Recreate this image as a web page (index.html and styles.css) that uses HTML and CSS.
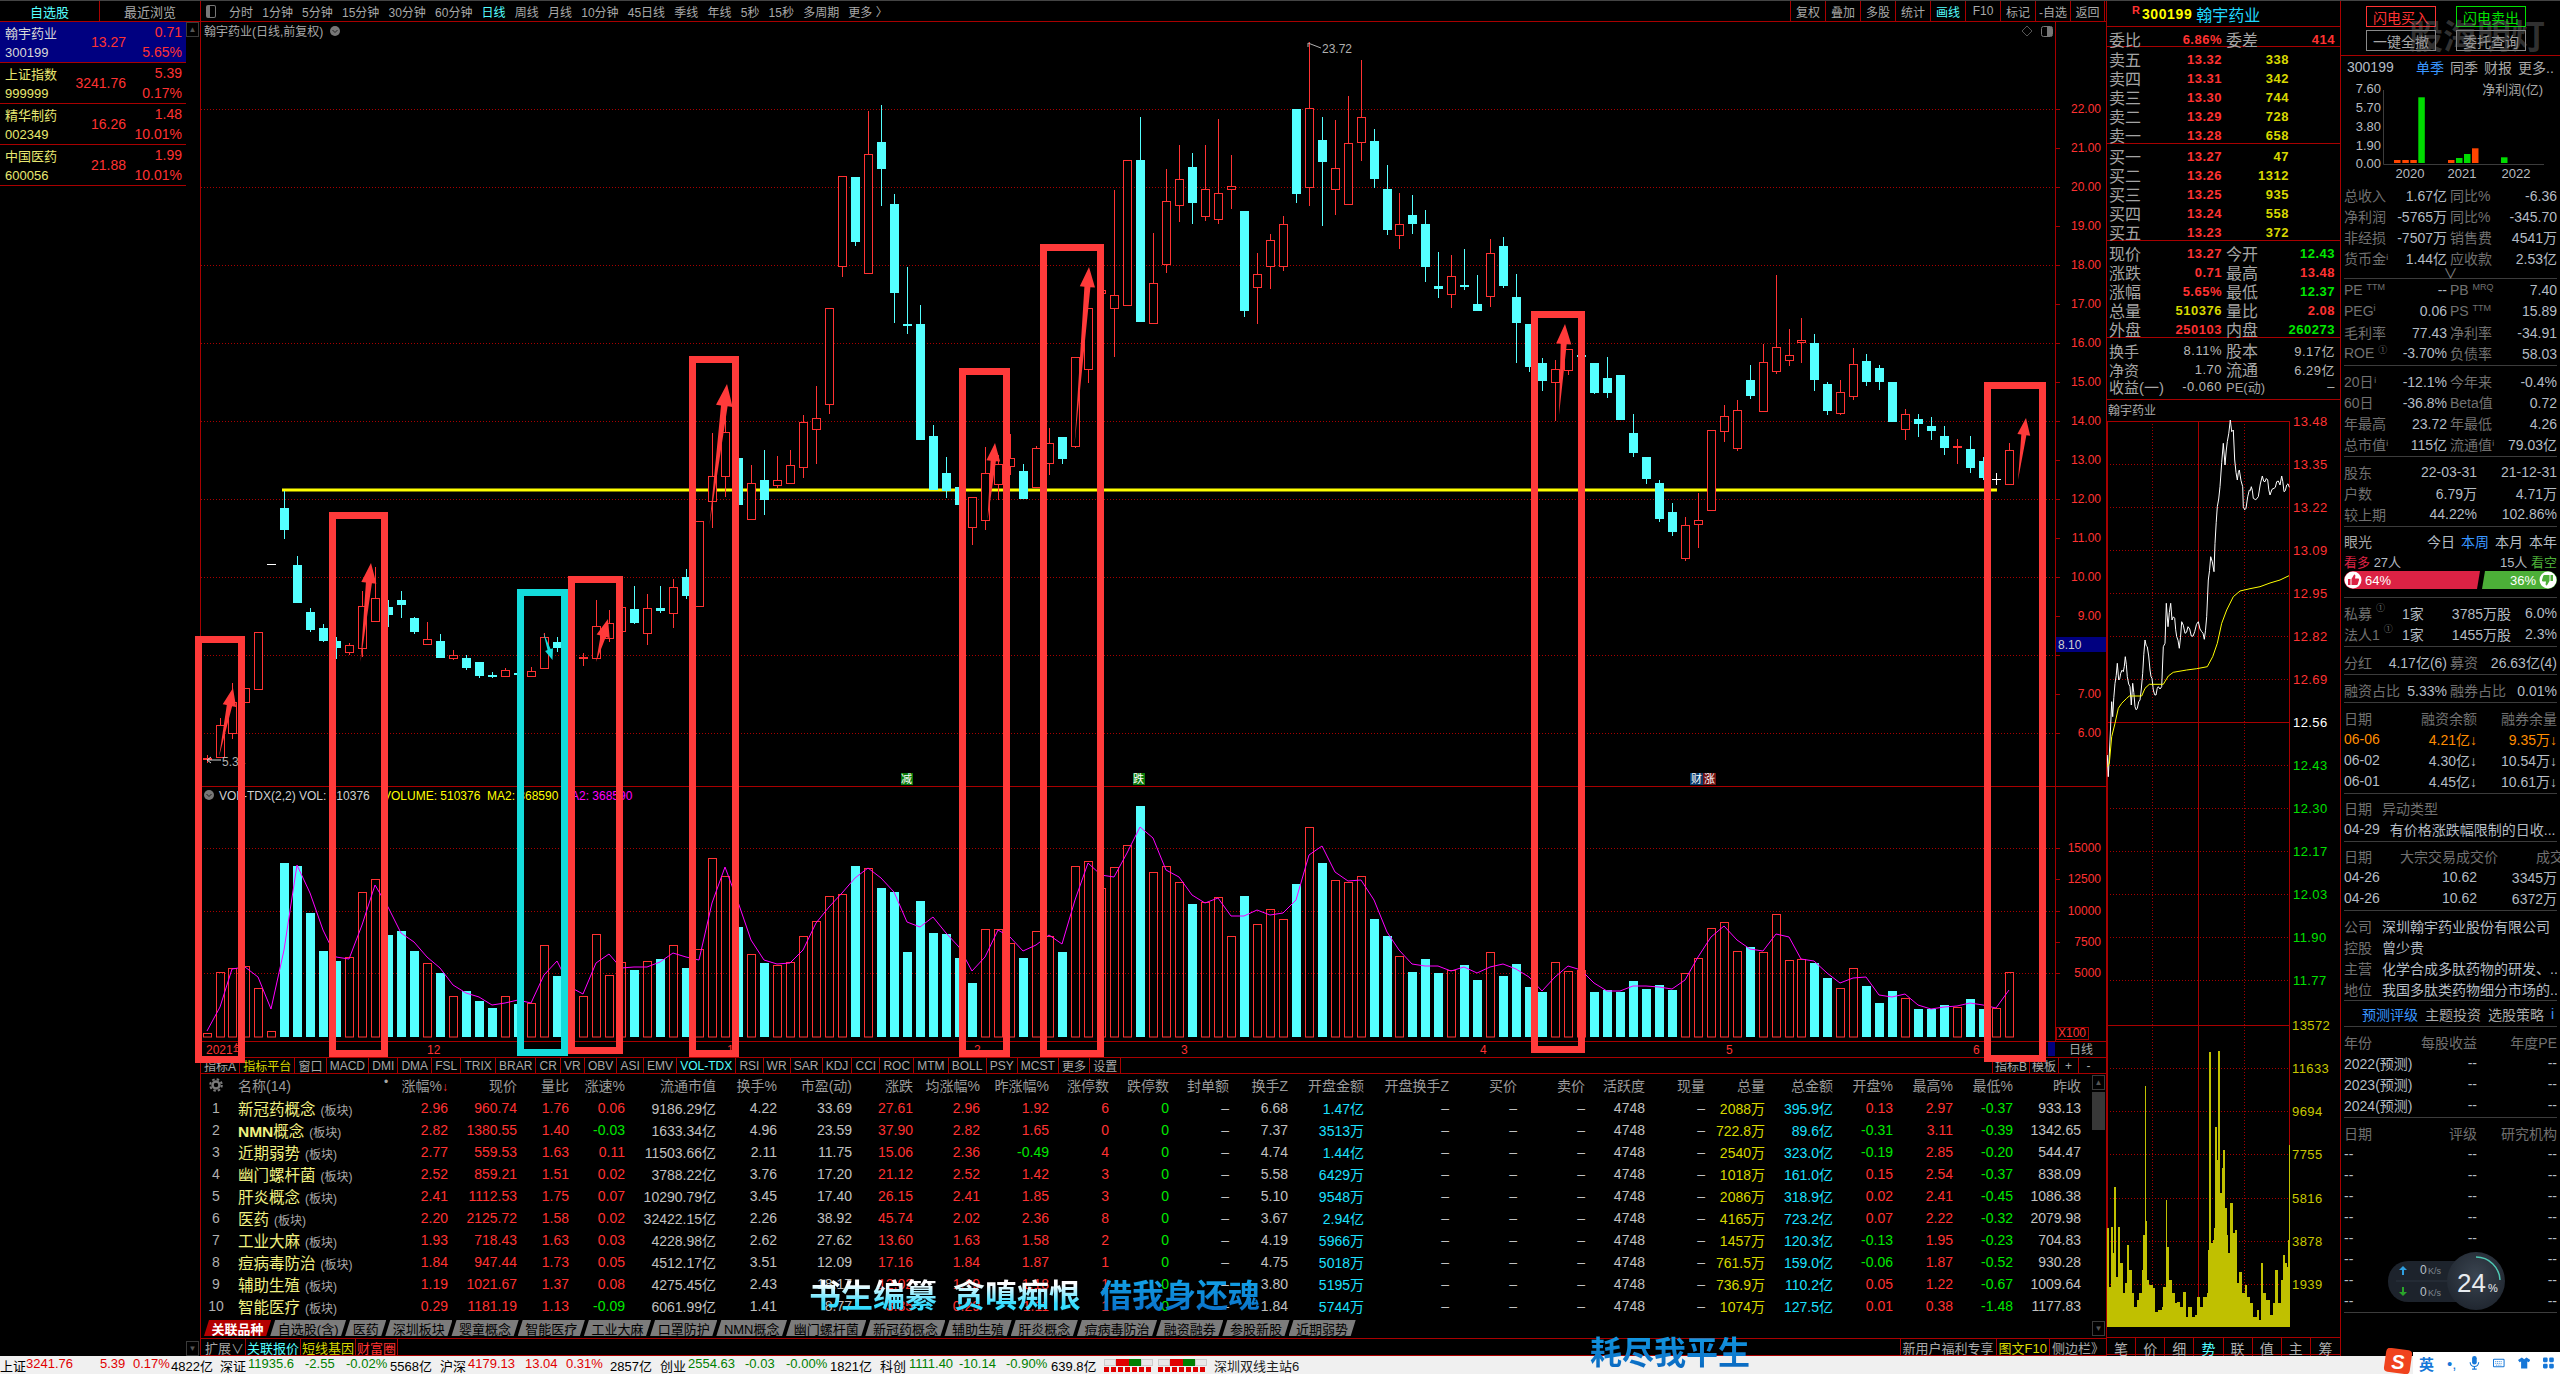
FILE: index.html
```html
<!DOCTYPE html>
<html lang="zh-CN">
<head>
<meta charset="utf-8">
<title>翰宇药业</title>
<link rel="stylesheet" href="styles.css">
</head>
<body>
<div class="app">
  <div class="workspace">
    <aside class="watch">
      <div class="watch-tabs"><span class="on">自选股</span><span>最近浏览</span></div>
      <div class="watch-body">
        <div class="watch-list">
          <div class="stock sel"><b>翰宇药业</b><i>13.27</i><em>0.71</em><u>300199</u><em>5.65%</em></div>
          <div class="stock"><b>上证指数</b><i>3241.76</i><em>5.39</em><u>999999</u><em>0.17%</em></div>
          <div class="stock"><b>精华制药</b><i>16.26</i><em>1.48</em><u>002349</u><em>10.01%</em></div>
          <div class="stock"><b>中国医药</b><i>21.88</i><em>1.99</em><u>600056</u><em>10.01%</em></div>
        </div>
        <div class="watch-scroll"><span class="sb-btn">▲</span><span class="sb-btn">▼</span></div>
      </div>
    </aside>

    <section class="center">
      <nav class="toolbar">
        <span class="pane-toggle"></span>
        <div class="periods">
          <span>分时</span><span>1分钟</span><span>5分钟</span><span>15分钟</span><span>30分钟</span><span>60分钟</span><span class="c">日线</span><span>周线</span><span>月线</span><span>10分钟</span><span>45日线</span><span>季线</span><span>年线</span><span>5秒</span><span>15秒</span><span>多周期</span><span>更多 〉</span>
        </div>
        <div class="actions">
          <span>复权</span><span>叠加</span><span>多股</span><span>统计</span><span class="c">画线</span><span>F10</span><span>标记</span><span>-自选</span><span>返回</span>
        </div>
      </nav>

      <svg id="chart" class="chart" viewBox="201 22 1905 1035" width="1905" height="1035"></svg>

      <div class="ind-tabs">
        <span class="wide">指标A</span><span class="y">指标平台</span><span>窗口</span><span>MACD</span><span>DMI</span><span>DMA</span><span>FSL</span><span>TRIX</span><span>BRAR</span><span>CR</span><span>VR</span><span>OBV</span><span>ASI</span><span>EMV</span><span class="c">VOL-TDX</span><span>RSI</span><span>WR</span><span>SAR</span><span>KDJ</span><span>CCI</span><span>ROC</span><span>MTM</span><span>BOLL</span><span>PSY</span><span>MCST</span><span>更多</span><span>设置</span>
        <div class="ind-right"><span>指标B</span><span>模板</span><span>+</span><span>-</span></div>
      </div>

      <div class="mid">
        <div class="mid-main">
          <div class="tbl">
            <div class="tr th">
              <span class="no"><svg class="gear" viewBox="0 0 14 14" width="14" height="14"><circle cx="7" cy="7" r="3.500" fill="none" stroke="#7a7a7a" stroke-width="2.500"/><circle cx="7" cy="7" r="5.800" fill="none" stroke="#7a7a7a" stroke-width="2" stroke-dasharray="2.500 2.050"/></svg></span><span class="nm">名称(14)<small class="dot">•</small></span><span>涨幅%<b class="r">↓</b></span><span>现价</span><span>量比</span><span>涨速%</span><span>流通市值</span><span>换手%</span><span>市盈(动)</span><span>涨跌</span><span>均涨幅%</span><span>昨涨幅%</span><span>涨停数</span><span>跌停数</span><span>封单额</span><span>换手Z</span><span>开盘金额</span><span>开盘换手Z</span><span>买价</span><span>卖价</span><span>活跃度</span><span>现量</span><span>总量</span><span>总金额</span><span>开盘%</span><span>最高%</span><span>最低%</span><span>昨收</span>
            </div>
            <div class="tr"><span class="no">1</span><span class="nm">新冠药概念<small>(板块)</small></span><span class="r">2.96</span><span class="r">960.74</span><span class="r">1.76</span><span class="r">0.06</span><span>9186.29亿</span><span>4.22</span><span>33.69</span><span class="r">27.61</span><span class="r">2.96</span><span class="r">1.92</span><span class="r">6</span><span class="g">0</span><span>–</span><span>6.68</span><span class="b">1.47亿</span><span>–</span><span>–</span><span>–</span><span>4748</span><span>–</span><span class="y">2088万</span><span class="b">395.9亿</span><span class="r">0.13</span><span class="r">2.97</span><span class="g">-0.37</span><span>933.13</span></div>
            <div class="tr"><span class="no">2</span><span class="nm"><strong>NMN</strong>概念<small>(板块)</small></span><span class="r">2.82</span><span class="r">1380.55</span><span class="r">1.40</span><span class="g">-0.03</span><span>1633.34亿</span><span>4.96</span><span>23.59</span><span class="r">37.90</span><span class="r">2.82</span><span class="r">1.65</span><span class="r">0</span><span class="g">0</span><span>–</span><span>7.37</span><span class="b">3513万</span><span>–</span><span>–</span><span>–</span><span>4748</span><span>–</span><span class="y">722.8万</span><span class="b">89.6亿</span><span class="g">-0.31</span><span class="r">3.11</span><span class="g">-0.39</span><span>1342.65</span></div>
            <div class="tr"><span class="no">3</span><span class="nm">近期弱势<small>(板块)</small></span><span class="r">2.77</span><span class="r">559.53</span><span class="r">1.63</span><span class="r">0.11</span><span>11503.66亿</span><span>2.11</span><span>11.75</span><span class="r">15.06</span><span class="r">2.36</span><span class="g">-0.49</span><span class="r">4</span><span class="g">0</span><span>–</span><span>4.74</span><span class="b">1.44亿</span><span>–</span><span>–</span><span>–</span><span>4748</span><span>–</span><span class="y">2540万</span><span class="b">323.0亿</span><span class="g">-0.19</span><span class="r">2.85</span><span class="g">-0.20</span><span>544.47</span></div>
            <div class="tr"><span class="no">4</span><span class="nm">幽门螺杆菌<small>(板块)</small></span><span class="r">2.52</span><span class="r">859.21</span><span class="r">1.51</span><span class="r">0.02</span><span>3788.22亿</span><span>3.76</span><span>17.20</span><span class="r">21.12</span><span class="r">2.52</span><span class="r">1.42</span><span class="r">3</span><span class="g">0</span><span>–</span><span>5.58</span><span class="b">6429万</span><span>–</span><span>–</span><span>–</span><span>4748</span><span>–</span><span class="y">1018万</span><span class="b">161.0亿</span><span class="r">0.15</span><span class="r">2.54</span><span class="g">-0.37</span><span>838.09</span></div>
            <div class="tr"><span class="no">5</span><span class="nm">肝炎概念<small>(板块)</small></span><span class="r">2.41</span><span class="r">1112.53</span><span class="r">1.75</span><span class="r">0.07</span><span>10290.79亿</span><span>3.45</span><span>17.40</span><span class="r">26.15</span><span class="r">2.41</span><span class="r">1.85</span><span class="r">3</span><span class="g">0</span><span>–</span><span>5.10</span><span class="b">9548万</span><span>–</span><span>–</span><span>–</span><span>4748</span><span>–</span><span class="y">2086万</span><span class="b">318.9亿</span><span class="r">0.02</span><span class="r">2.41</span><span class="g">-0.45</span><span>1086.38</span></div>
            <div class="tr"><span class="no">6</span><span class="nm">医药<small>(板块)</small></span><span class="r">2.20</span><span class="r">2125.72</span><span class="r">1.58</span><span class="r">0.02</span><span>32422.15亿</span><span>2.26</span><span>38.92</span><span class="r">45.74</span><span class="r">2.02</span><span class="r">2.36</span><span class="r">8</span><span class="g">0</span><span>–</span><span>3.67</span><span class="b">2.94亿</span><span>–</span><span>–</span><span>–</span><span>4748</span><span>–</span><span class="y">4165万</span><span class="b">723.2亿</span><span class="r">0.07</span><span class="r">2.22</span><span class="g">-0.32</span><span>2079.98</span></div>
            <div class="tr"><span class="no">7</span><span class="nm">工业大麻<small>(板块)</small></span><span class="r">1.93</span><span class="r">718.43</span><span class="r">1.63</span><span class="r">0.03</span><span>4228.98亿</span><span>2.62</span><span>27.62</span><span class="r">13.60</span><span class="r">1.63</span><span class="r">1.58</span><span class="r">2</span><span class="g">0</span><span>–</span><span>4.19</span><span class="b">5966万</span><span>–</span><span>–</span><span>–</span><span>4748</span><span>–</span><span class="y">1457万</span><span class="b">120.3亿</span><span class="g">-0.13</span><span class="r">1.95</span><span class="g">-0.23</span><span>704.83</span></div>
            <div class="tr"><span class="no">8</span><span class="nm">痘病毒防治<small>(板块)</small></span><span class="r">1.84</span><span class="r">947.44</span><span class="r">1.73</span><span class="r">0.05</span><span>4512.17亿</span><span>3.51</span><span>12.09</span><span class="r">17.16</span><span class="r">1.84</span><span class="r">1.87</span><span class="r">1</span><span class="g">0</span><span>–</span><span>4.75</span><span class="b">5018万</span><span>–</span><span>–</span><span>–</span><span>4748</span><span>–</span><span class="y">761.5万</span><span class="b">159.0亿</span><span class="g">-0.06</span><span class="r">1.87</span><span class="g">-0.52</span><span>930.28</span></div>
            <div class="tr"><span class="no">9</span><span class="nm">辅助生殖<small>(板块)</small></span><span class="r">1.19</span><span class="r">1021.67</span><span class="r">1.37</span><span class="r">0.08</span><span>4275.45亿</span><span>2.43</span><span>18.17</span><span class="r">12.02</span><span class="r">1.19</span><span class="r">1.18</span><span class="r">1</span><span class="g">0</span><span>–</span><span>3.80</span><span class="b">5195万</span><span>–</span><span>–</span><span>–</span><span>4748</span><span>–</span><span class="y">736.9万</span><span class="b">110.2亿</span><span class="r">0.05</span><span class="r">1.22</span><span class="g">-0.67</span><span>1009.64</span></div>
            <div class="tr"><span class="no">10</span><span class="nm">智能医疗<small>(板块)</small></span><span class="r">0.29</span><span class="r">1181.19</span><span class="r">1.13</span><span class="g">-0.09</span><span>6061.99亿</span><span>1.41</span><span>8.77</span><span class="r">3.35</span><span class="r">0.29</span><span class="r">1.11</span><span class="r">1</span><span class="g">0</span><span>–</span><span>1.84</span><span class="b">5744万</span><span>–</span><span>–</span><span>–</span><span>4748</span><span>–</span><span class="y">1074万</span><span class="b">127.5亿</span><span class="r">0.01</span><span class="r">0.38</span><span class="g">-1.48</span><span>1177.83</span></div>
          </div>
          <div class="sectors">
            <span class="on">关联品种</span><span>自选股(含)</span><span>医药</span><span>深圳板块</span><span>婴童概念</span><span>智能医疗</span><span>工业大麻</span><span>口罩防护</span><span>NMN概念</span><span>幽门螺杆菌</span><span>新冠药概念</span><span>辅助生殖</span><span>肝炎概念</span><span>痘病毒防治</span><span>融资融券</span><span>参股新股</span><span>近期弱势</span>
          </div>
        </div>
        <div class="tbl-scroll"><span class="sb-btn">▲</span><span class="sb-thumb"></span><span class="sb-btn end">▼</span></div>
      </div>

      <div class="foot">
        <span>扩展∨</span><span class="c">关联报价</span><span class="y">短线基因</span><span class="r">财富圈</span>
        <div class="foot-right"><span>新用户福利专享</span><span class="y">图文F10</span><span>侧边栏》</span></div>
      </div>
    </section>

    <section class="quote">
      <div class="q-title"><sup>R</sup><b>300199</b><span>翰宇药业</span></div>
      <div class="q-block one">
        <div class="q4"><span>委比</span><b class="r">6.86%</b><span>委差</span><b class="r">414</b></div>
      </div>
      <div class="q-block">
        <div class="q3"><span>卖五</span><b class="r">13.32</b><b class="y">338</b></div>
        <div class="q3"><span>卖四</span><b class="r">13.31</b><b class="y">342</b></div>
        <div class="q3"><span>卖三</span><b class="r">13.30</b><b class="y">744</b></div>
        <div class="q3"><span>卖二</span><b class="r">13.29</b><b class="y">728</b></div>
        <div class="q3"><span>卖一</span><b class="r">13.28</b><b class="y">658</b></div>
      </div>
      <div class="q-block">
        <div class="q3"><span>买一</span><b class="r">13.27</b><b class="y">47</b></div>
        <div class="q3"><span>买二</span><b class="r">13.26</b><b class="y">1312</b></div>
        <div class="q3"><span>买三</span><b class="r">13.25</b><b class="y">935</b></div>
        <div class="q3"><span>买四</span><b class="r">13.24</b><b class="y">558</b></div>
        <div class="q3"><span>买五</span><b class="r">13.23</b><b class="y">372</b></div>
      </div>
      <div class="q-block">
        <div class="q4"><span>现价</span><b class="r">13.27</b><span>今开</span><b class="g">12.43</b></div>
        <div class="q4"><span>涨跌</span><b class="r">0.71</b><span>最高</span><b class="r">13.48</b></div>
        <div class="q4"><span>涨幅</span><b class="r">5.65%</b><span>最低</span><b class="g">12.37</b></div>
        <div class="q4"><span>总量</span><b class="y">510376</b><span>量比</span><b class="r">2.08</b></div>
        <div class="q4"><span>外盘</span><b class="r">250103</b><span>内盘</span><b class="g">260273</b></div>
      </div>
      <div class="q-block last">
        <div class="q4"><span>换手</span><b>8.11%</b><span>股本</span><b>9.17亿</b></div>
        <div class="q4"><span>净资</span><b>1.70</b><span>流通</span><b>6.29亿</b></div>
        <div class="q4"><span>收益(一)</span><b>-0.060</b><span>PE(动)</span><b>–</b></div>
      </div>
      <svg id="intraday" class="intraday" viewBox="2107 400 233 937" width="233" height="937"></svg>
      <div class="detail-tabs"><span>笔</span><span>价</span><span>细</span><span class="c">势</span><span>联</span><span>值</span><span>主</span><span>筹</span></div>
    </section>

    <aside class="info">
      <div class="trade">
        <span class="t-buy">闪电买入</span><span class="t-sell">闪电卖出</span><span>一键全撤</span><span>委托查询</span>
        <div class="wm">股海明灯</div>
      </div>
      <div class="fin-tabs"><span class="code">300199</span><span class="blue">单季</span><span>同季</span><span>财报</span><span>更多..</span></div>
      <svg id="mini" class="mini" viewBox="2341 78 219 106" width="219" height="106"></svg>

      <div class="sec first">
        <div class="kv"><p><b>总收入</b><i>1.67亿</i></p><p><b>同比%</b><i>-6.36</i></p></div>
        <div class="kv"><p><b>净利润</b><i>-5765万</i></p><p><b>同比%</b><i>-345.70</i></p></div>
        <div class="kv"><p><b>非经损</b><i>-7507万</i></p><p><b>销售费</b><i>4541万</i></p></div>
        <div class="kv"><p><b>货币金ⁱ</b><i>1.44亿</i></p><p><b>应收款</b><i>2.53亿</i></p></div>
        <div class="chev">∨</div>
      </div>
      <div class="sec nopad">
        <div class="kv"><p><b>PE <sup>TTM</sup></b><i>--</i></p><p><b>PB <sup>MRQ</sup></b><i>7.40</i></p></div>
        <div class="kv"><p><b>PEG<sup>i</sup></b><i>0.06</i></p><p><b>PS <sup>TTM</sup></b><i>15.89</i></p></div>
        <div class="kv"><p><b>毛利率</b><i>77.43</i></p><p><b>净利率</b><i>-34.91</i></p></div>
        <div class="kv"><p><b>ROE <sup>①</sup></b><i>-3.70%</i></p><p><b>负债率</b><i>58.03</i></p></div>
      </div>
      <div class="sec">
        <div class="kv"><p><b>20日ⁱ</b><i>-12.1%</i></p><p><b>今年来</b><i>-0.4%</i></p></div>
        <div class="kv"><p><b>60日</b><i>-36.8%</i></p><p><b>Beta值</b><i>0.72</i></p></div>
        <div class="kv"><p><b>年最高</b><i>23.72</i></p><p><b>年最低</b><i>4.26</i></p></div>
        <div class="kv"><p><b>总市值ⁱ</b><i>115亿</i></p><p><b>流通值ⁱ</b><i>79.03亿</i></p></div>
      </div>
      <div class="sec">
        <div class="kv3"><b>股东</b><i>22-03-31</i><i>21-12-31</i></div>
        <div class="kv3"><b>户数</b><i>6.79万</i><i>4.71万</i></div>
        <div class="kv3"><b>较上期</b><i>44.22%</i><i>102.86%</i></div>
      </div>
      <div class="sec vision">
        <div class="v-head"><span class="lbl">眼光</span><div><span>今日</span><span class="blue">本周</span><span>本月</span><span>本年</span></div></div>
        <div class="v-count"><span><em class="vr">看多</em> 27人</span><span>15人 <em class="vg">看空</em></span></div>
        <div class="v-bar">
          <div class="v-up"><svg class="thumb" viewBox="0 0 18 18"><circle cx="9" cy="9" r="8.5" fill="#fff"/><path d="M4 8h2.500v6H4zM7.500 8l2.600-4.500c1.200 0 1.500 1 1.200 2L11 7.500h3c.8 0 1.200.7 1 1.400l-1.200 4.200c-.2.600-.6.900-1.200.900H7.500z" fill="#dc2244"/></svg>64%</div>
          <div class="v-down">36%<svg class="thumb" viewBox="0 0 18 18"><circle cx="9" cy="9" r="8.5" fill="#fff"/><path d="M14 10h-2.500V4H14zM10.500 10l-2.600 4.500c-1.200 0-1.500-1-1.200-2L7 10.500H4c-.8 0-1.200-.7-1-1.400l1.200-4.200c.2-.6.600-.9 1.200-.9h5.100z" fill="#4caf38"/></svg></div>
        </div>
      </div>
      <div class="sec">
        <div class="kv4"><b>私募 <sup>①</sup></b><i>1家</i><i>3785万股</i><i>6.0%</i></div>
        <div class="kv4"><b>法人1 <sup>①</sup></b><i>1家</i><i>1455万股</i><i>2.3%</i></div>
      </div>
      <div class="sec">
        <div class="kv wide1"><p><b>分红</b><i>4.17亿(6)</i></p><p><b>募资</b><i>26.63亿(4)</i></p></div>
      </div>
      <div class="sec">
        <div class="kv"><p><b>融资占比</b><i>5.33%</i></p><p><b>融券占比</b><i>0.01%</i></p></div>
      </div>
      <div class="sec">
        <div class="kv3 head"><b>日期</b><b>融资余额</b><b>融券余量</b></div>
        <div class="kv3 hot"><i>06-06</i><i>4.21亿↓</i><i>9.35万↓</i></div>
        <div class="kv3"><i>06-02</i><i>4.30亿↓</i><i>10.54万↓</i></div>
        <div class="kv3"><i>06-01</i><i>4.45亿↓</i><i>10.61万↓</i></div>
      </div>
      <div class="sec t3">
        <div class="kt"><b>日期</b><b>异动类型</b></div>
        <div class="kt"><i>04-29</i><i class="cut">有价格涨跌幅限制的日收...</i></div>
      </div>
      <div class="sec t3">
        <div class="kv3 head"><b>日期</b><b>大宗交易成交价</b><b>成交额</b></div>
        <div class="kv3"><i>04-26</i><i>10.62</i><i>3345万</i></div>
        <div class="kv3"><i>04-26</i><i>10.62</i><i>6372万</i></div>
      </div>
      <div class="sec tail">
        <div class="kt"><b>公司</b><i class="cut">深圳翰宇药业股份有限公司</i></div>
        <div class="kt"><b>控股</b><i class="cut">曾少贵</i></div>
        <div class="kt"><b>主营</b><i class="cut">化学合成多肽药物的研发、..</i></div>
        <div class="kt"><b>地位</b><i class="cut">我国多肽类药物细分市场的..</i></div>
      </div>
      <div class="sec t1">
        <div class="topics"><span class="blue">预测评级</span><span>主题投资</span><span>选股策略</span><span class="blue">i</span></div>
      </div>
      <div class="sec">
        <div class="kv3 head"><b>年份</b><b>每股收益</b><b>年度PE</b></div>
        <div class="kv3"><i>2022(预测)</i><i>--</i><i>--</i></div>
        <div class="kv3"><i>2023(预测)</i><i>--</i><i>--</i></div>
        <div class="kv3"><i>2024(预测)</i><i>--</i><i>--</i></div>
      </div>
      <div class="sec">
        <div class="kv3 head"><b>日期</b><b>评级</b><b>研究机构</b></div>
        <div class="kv3"><i>--</i><i>--</i><i>--</i></div>
        <div class="kv3"><i>--</i><i>--</i><i>--</i></div>
        <div class="kv3"><i>--</i><i>--</i><i>--</i></div>
        <div class="kv3"><i>--</i><i>--</i><i>--</i></div>
        <div class="kv3"><i>--</i><i>--</i><i>--</i></div>
        <div class="kv3"><i>--</i><i>--</i><i>--</i></div>
        <div class="kv3"><i>--</i><i>--</i><i>--</i></div>
        <div class="kv3"><i>--</i><i>--</i><i>--</i></div>
      </div>
    </aside>
  </div>

  <footer class="status">
    <div class="mk mk-first"><b>上证</b><span class="up">3241.76</span><span class="up">5.39</span><span class="up">0.17%</span><span>4822亿</span></div>
    <div class="mk"><b>深证</b><span class="dn">11935.6</span><span class="dn">-2.55</span><span class="dn">-0.02%</span><span>5568亿</span></div>
    <div class="mk"><b>沪深</b><span class="up">4179.13</span><span class="up">13.04</span><span class="up">0.31%</span><span>2857亿</span></div>
    <div class="mk"><b>创业</b><span class="dn">2554.63</span><span class="dn">-0.03</span><span class="dn">-0.00%</span><span>1821亿</span></div>
    <div class="mk mk-last"><b>科创</b><span class="dn">1111.40</span><span class="dn">-10.14</span><span class="dn">-0.90%</span><span>639.8亿</span></div>
    <div class="meters">
      <div class="meter"><div class="leds"><i></i><i class="lr"></i><i class="lg"></i><i></i></div><div class="dash"></div></div>
      <div class="meter"><div class="leds"><i></i><i class="lr"></i><i class="lg"></i><i></i></div><div class="dash"></div></div>
    </div>
    <span class="host">深圳双线主站6</span>
  </footer>

  <div class="sub s1">书生编纂</div>
  <div class="sub s2">贪嗔痴恨</div>
  <div class="sub s3">借我身还魂</div>
  <div class="sub s4">耗尽我平生</div>

  <svg class="gauge" viewBox="0 0 172 62" width="172" height="62">
    <defs><radialGradient id="gg" cx=".5" cy=".4" r=".7"><stop offset="0" stop-color="#3a4450"/><stop offset="1" stop-color="#1c222b"/></radialGradient></defs>
    <rect x="0" y="11" width="90" height="41" rx="20" fill="#1d232c"/>
    <line x1="8" y1="31" x2="62" y2="31" stroke="#2c343f"/>
    <path d="M14 25v-5l-3 0 4-4 4 4-3 0v5z" fill="#2f9fe0"/>
    <path d="M14 37v5l-3 0 4 4 4-4-3 0v-5z" fill="#2aa52a"/>
    <text class="g-num" x="32" y="24">0</text><text class="g-unit" x="40" y="24">K/s</text>
    <text class="g-num" x="32" y="46">0</text><text class="g-unit" x="40" y="46">K/s</text>
    <circle cx="88" cy="31" r="29" fill="url(#gg)"/>
    <path d="M88 7a24 24 0 0 1 24 23" fill="none" stroke="#4fc8b4" stroke-width="1.5"/>
    <text class="g-pct" x="69" y="42">24</text><text class="g-sym" x="100" y="42">%</text>
  </svg>

  <div class="ime">
    <svg class="ime-s" viewBox="0 0 30 26" width="30" height="26"><rect x="2" y="1" width="26" height="24" rx="4" fill="#f0431e" transform="rotate(8 15 13)"/><text class="ime-t" x="15" y="21">S</text></svg>
    <b>英</b><span>•,</span>
    <svg viewBox="0 0 14 18" width="14" height="18"><rect x="4" y="0" width="6" height="11" rx="3" fill="#1677d8"/><path d="M1.500 8a5.500 5.500 0 0 0 11 0M7 14v3M4 17h6" fill="none" stroke="#1677d8" stroke-width="1.5"/></svg>
    <svg viewBox="0 0 16 12" width="15" height="12"><rect x=".7" y=".7" width="14.600" height="10.600" rx="1" fill="none" stroke="#1677d8" stroke-width="1.4"/><path d="M3 4h10M3 6.500h10M4 9h8" stroke="#1677d8" stroke-dasharray="1.500 1"/></svg>
    <svg viewBox="0 0 16 14" width="16" height="14"><path d="M5 0l3 2 3-2 5 3-2 3-2-1v9H4V5L2 6 0 3z" fill="#1677d8"/></svg>
    <svg viewBox="0 0 14 14" width="14" height="14"><rect width="6" height="6" rx="1.500" fill="#1677d8"/><rect x="8" width="6" height="6" rx="1.500" fill="#1677d8"/><rect y="8" width="6" height="6" rx="1.500" fill="#1677d8"/><rect x="8" y="8" width="6" height="6" rx="1.500" fill="#1677d8"/></svg>
  </div>
</div>
<script src="app.js"></script>
</body>
</html>
```

FILE: styles.css
```css
* { box-sizing: border-box; }
html, body { margin: 0; padding: 0; background: #000; overflow: hidden; }
body { font: 12px "Liberation Sans", "Noto Sans CJK SC", sans-serif; color: #a8a8a8; }
p { margin: 0; }
i, em, u, b { font-style: normal; text-decoration: none; font-weight: normal; }

.app { position: relative; width: 2560px; height: 1374px; border-top: 1px solid #444; overflow: hidden; background: #000; }
.workspace { display: flex; height: 1355px; }

.c { color: #54ffff !important; }
.y { color: #d8d800 !important; }
.r { color: #ff3232 !important; }
.g { color: #00e800 !important; }
.b { color: #1ce0ff !important; }
.blue { color: #3a96ff !important; }

/* watch list */
.watch { width: 201px; flex: none; border-right: 1px solid #a80000; display: flex; flex-direction: column; }
.watch-tabs { display: flex; height: 21px; border-bottom: 1px solid #a80000; font-size: 13px; }
.watch-tabs span { display: flex; align-items: center; justify-content: center; }
.watch-tabs span:first-child { width: 100px; border-right: 1px solid #a80000; }
.watch-tabs span:last-child { flex: 1; }
.watch-tabs .on { color: #54ffff; }
.watch-body { flex: 1; display: flex; }
.watch-list { width: 186px; }
.stock { height: 41px; border-bottom: 1px solid #a80000; display: grid; grid-template-columns: 60px 61px 56px; grid-template-rows: 20px 20px; padding-left: 5px; color: #ff3232; font-size: 13px; align-items: center; }
.stock b, .stock u { color: #e8e870; }
.stock b { font-size: 13px; }
.stock u { font-size: 13px; }
.stock i { grid-row: 1 / span 2; grid-column: 2; text-align: right; font-size: 14px; }
.stock em { text-align: right; font-size: 14px; }
.stock.sel { background: #000080; }
.stock.sel b, .stock.sel u { color: #d8d8d8; }
.watch-scroll { flex: 1; display: flex; flex-direction: column; justify-content: space-between; }
.sb-btn { width: 13px; height: 15px; border: 1px solid #3a3a3a; color: #555; font-size: 8px; display: flex; align-items: center; justify-content: center; }

/* toolbar */
.center { width: 1906px; flex: none; border-right: 1px solid #a80000; display: flex; flex-direction: column; }
.toolbar { height: 21px; border-bottom: 1px solid #a80000; display: flex; align-items: center; color: #a8a8a8; position: relative; flex: none; }
.pane-toggle { width: 10px; height: 13px; border: 1px solid #777; border-left-width: 4px; margin-left: 5px; flex: none; border-radius: 2px; }
.periods { display: flex; gap: 9.2px; margin-left: 13px; }
.actions { margin-left: auto; display: flex; height: 20px; margin-right: 1px; }
.actions span { width: 35px; border-left: 1px solid #a80000; display: flex; align-items: center; justify-content: center; }
.actions span:last-child { border-right: 1px solid #a80000; }

.chart, .intraday, .mini { display: block; flex: none; }
.chart { overflow: visible; position: relative; z-index: 1; }
.chart text, .intraday text, .mini text { font-family: "Liberation Sans", "Noto Sans CJK SC", sans-serif; }
.ax { fill: #ff3232; font-size: 12px; }
.ttl { fill: #a8a8a8; font-size: 12px; }
.ann { fill: #b0b0b0; font-size: 12px; }
.wh { fill: #d0d0d0; font-size: 12px; }
.yl { fill: #ffff00; font-size: 12px; }
.mg { fill: #ff00ff; font-size: 12px; }
.mark { fill: #fff; font-size: 11px; }
.dt { fill: #ff3232; font-size: 12px; }
.grid-dot { stroke: #a80000; stroke-dasharray: 1 2; }
.line-red { stroke: #a80000; }
.candle-r { fill: #000; stroke: #ff3232; }
.candle-R { fill: #ff3232; }
.wick-r { stroke: #ff3232; }
.candle-c { fill: #54ffff; }
.wick-c { stroke: #54ffff; }
.candle-w { fill: #fff; }
.wick-w { stroke: #fff; }
.vol-r { fill: none; stroke: #ff3232; }
.box { fill: none; stroke: #ff3a3a; stroke-width: 7; }
.box.cy { stroke: #14dcdc; }
.arrow { fill: #ff3a3a; }
.arrow.cy { fill: #14dcdc; }
.yline { stroke: #ffff00; stroke-width: 3; }
.maline { fill: none; stroke: #ff00ff; }
.pline { fill: none; stroke: #fff; }
.aline { fill: none; stroke: #ffff00; }
.ibar { fill: #c0c000; shape-rendering: crispEdges; }
.lab-r { fill: #ff3232; font-size: 13px; letter-spacing: .4px; }
.lab-w { fill: #fff; font-size: 13px; letter-spacing: .4px; }
.lab-g { fill: #00e000; font-size: 13px; letter-spacing: .4px; }
.lab-y { fill: #c8c800; font-size: 13px; letter-spacing: .4px; }
.mini-l { fill: #b8bcc0; font-size: 13px; }
.mini-t { fill: #a8a8a8; font-size: 13px; }

/* indicator tabs */
.ind-tabs { height: 17px; flex: none; display: flex; border-top: 1px solid #a80000; border-bottom: 1px solid #a80000; font-size: 12px; color: #a8a8a8; }
.ind-tabs > span { padding: 0 3.100px; border-right: 1px solid #a80000; display: flex; align-items: center; white-space: nowrap; }
.ind-right { margin-left: auto; display: flex; margin-right: 8px; }
.ind-right span { padding: 0 2px; border-left: 1px solid #a80000; display: flex; align-items: center; }
.ind-right span:nth-child(n+3) { width: 20px; justify-content: center; }

/* table */
.mid { flex: 1; display: flex; min-height: 0; }
.mid-main { width: 1891px; display: flex; flex-direction: column; }
.tbl { flex: 1; }
.tr { display: grid; height: 22px; padding-bottom: 2px; align-items: center; text-align: right; color: #c0c0c0; font-size: 14px; white-space: nowrap;
  grid-template-columns: 30px 169px 48px 69px 52px 56px 91px 61px 75px 61px 67px 69px 60px 60px 60px 59px 76px 85px 68px 68px 60px 60px 60px 68px 60px 60px 60px 68px; }
.th { height: 23px; color: #9a9a9a; padding-top: 1px; padding-bottom: 2px; }
.gear { display: block; margin: 0 auto; }
.th .r { font-size: 12px; }
.no { text-align: center; color: #b0b0b0; }
.nm { text-align: left; padding-left: 7px; color: #f0f080; font-size: 15.500px; position: relative; }
.th .nm { color: #9a9a9a; font-size: 14px; }
.nm small { font-size: 12px; color: #a8a8a8; margin-left: 5px; }
.nm .dot { position: absolute; left: 148px; top: 0; }
.nm strong { font-weight: bold; }
.tbl-scroll { width: 14px; display: flex; flex-direction: column; padding-top: 1px; padding-bottom: 2px; }
.sb-thumb { height: 38px; width: 13px; background: #383838; margin-top: 2px; }
.sb-btn.end { margin-top: auto; }
.sectors { height: 18px; flex: none; display: flex; padding-left: 3px; gap: 2px; font-size: 13px; align-items: stretch; padding-bottom: 2px; }
.sectors span { background: #7c7c7c; color: #000; padding: 0 7.600px; clip-path: polygon(5px 0, 100% 0, calc(100% - 5px) 100%, 0 100%); display: flex; align-items: center; white-space: nowrap; margin-right: -3px; }
.sectors .on { background: #b40000; color: #fff; font-weight: bold; }

.foot { height: 18px; flex: none; border-top: 1px solid #a80000; border-bottom: 1px solid #a80000; display: flex; font-size: 13px; padding-left: 3px; }
.foot > span { padding: 0 1px; border-right: 1px solid #a80000; display: flex; align-items: center; }
.foot-right { margin-left: auto; display: flex; }
.foot-right span { padding: 0 2px; border-left: 1px solid #a80000; display: flex; align-items: center; white-space: nowrap; }

/* quote column */
.quote { width: 234px; flex: none; border-right: 1px solid #a80000; display: flex; flex-direction: column; }
.q-title { height: 26px; border-bottom: 1px solid #a80000; display: flex; align-items: center; padding-left: 25px; font-size: 16px; flex: none; }
.q-title sup { color: #ff3232; font-size: 11px; font-weight: bold; margin-right: 2px; align-self: flex-start; margin-top: 3px; }
.q-title b { color: #ffff00; font-weight: bold; font-size: 14px; letter-spacing: .6px; }
.q-title span { color: #20d8ff; margin-left: 4px; }
.q-block { height: 97px; padding: 0 1px 0 2px; border-bottom: 1px solid #a80000; flex: none; }
.q-block.one { height: 20px; }
.q-block.last { height: 62px; }
.q3, .q4 { display: grid; height: 19px; padding-bottom: 2px; align-items: center; white-space: nowrap; font-size: 16px; color: #a4a4a4; }
.q3 { grid-template-columns: 50px 63px 67px; }
.q4 { grid-template-columns: 50px 63px 50px 63px; }
.q3 b, .q4 b { text-align: right; font-size: 13px; font-weight: bold; letter-spacing: .5px; color: #b8b8b8; }
.q4 span:nth-child(3) { padding-left: 4px; }
.last .q4 span:first-child { font-size: 15px; }
.last .q4:nth-child(3) span:nth-child(3) { font-size: 13px; }
.last b { font-weight: normal; }
.detail-tabs { height: 18px; flex: none; border-top: 1px solid #a80000; border-bottom: 1px solid #a80000; display: grid; grid-template-columns: repeat(8, 1fr); font-size: 14px; color: #b0b0b0; }
.detail-tabs span { display: flex; align-items: center; justify-content: center; border-right: 1px solid #a80000; }
.detail-tabs span:last-child { border-right: 0; }

/* info column */
.info { width: 219px; flex: none; padding: 0 3px; position: relative; font-size: 14px; color: #b4bcc4; }
.trade { margin: 0 -3px; height: 55px; border-bottom: 1px solid #a80000; display: grid; grid-template-columns: 70px 70px; grid-template-rows: 21px 21px; column-gap: 20px; row-gap: 3px; padding: 5px 0 0 25px; position: relative; font-size: 14px; }
.trade span { border: 1px solid #8a8a8a; display: flex; align-items: center; justify-content: center; color: #a8a8a8; }
.trade .t-buy { border-color: #ff3232; color: #ff3232; }
.trade .t-sell { border-color: #00e000; color: #00e000; }
.wm { position: absolute; left: 68px; top: 9px; font-size: 34px; font-weight: bold; color: rgba(120,120,120,.42); white-space: nowrap; }
.fin-tabs { height: 22px; display: flex; align-items: center; gap: 6px; margin-left: 3px; color: #a8a8a8; font-size: 14px; }
.fin-tabs .code { width: 63px; color: #b4bcc4; }
.mini { margin: 0 -3px; }
.sec { padding: 4px 0 2px; border-bottom: 1px solid #3c3c3c; }
.sec.first { padding-top: 0; padding-bottom: 0; }
.sec.nopad { padding-top: 0; }
.sec.t3 { padding-top: 3px; }
.sec.t1 { padding-top: 2px; }
.sec.tail { padding-bottom: 1px; }
.sec:last-child { padding-bottom: 1px; }
.kv { display: flex; justify-content: space-between; height: 21px; align-items: center; }
.kv p { display: flex; justify-content: space-between; white-space: nowrap; align-items: baseline; }
.kv p:first-child { width: 103px; }
.kv p:last-child { width: 107px; }
.info b { color: #707070; }
.info sup { font-size: 9px; vertical-align: top; line-height: 10px; }
.chev { height: 10px; line-height: 10px; text-align: center; color: #808080; }
.kv3 { display: grid; grid-template-columns: 56px 1fr 80px; height: 21px; align-items: center; white-space: nowrap; }
.kv3 > :nth-child(n+2) { text-align: right; }
.hot i { color: #ff8c00; }
.kt { display: flex; gap: 10px; height: 21px; align-items: center; white-space: nowrap; overflow: hidden; }
.kt .cut { overflow: hidden; }
.vision { padding-top: 3px; padding-bottom: 8px; }
.v-head { display: flex; justify-content: space-between; height: 21px; align-items: center; }
.v-head div { display: flex; gap: 6px; }
.v-head .lbl { color: #a8a8a8; }
.v-count { display: flex; justify-content: space-between; height: 20px; align-items: center; font-size: 13px; }
.vr { color: #dc2244; }
.vg { color: #4caf38; }
.v-bar { display: flex; height: 18px; color: #fff; font-size: 13px; gap: 2px; }
.v-up, .v-down { display: flex; align-items: center; gap: 3px; }
.v-up { background: #dc2244; width: 136px; clip-path: polygon(0 0, 100% 0, calc(100% - 3px) 100%, 0 100%); border-radius: 9px 0 0 9px; }
.v-down { background: #4caf38; flex: 1; justify-content: flex-end; clip-path: polygon(3px 0, 100% 0, 100% 100%, 0 100%); border-radius: 0 9px 9px 0; }
.thumb { width: 18px; height: 18px; flex: none; }
.kv4 { display: grid; grid-template-columns: 58px 22px 1fr 46px; height: 21px; align-items: center; white-space: nowrap; }
.kv4 i { text-align: right; }
.kv4 i:nth-child(2) { text-align: left; }
.topics { display: flex; gap: 7px; height: 21px; align-items: center; padding-left: 18px; color: #a8a8a8; }

/* status bar */
.status { position: relative; height: 18px; background: #f0f0f0; display: flex; align-items: center; color: #000; font-size: 13px; white-space: nowrap; z-index: 2; }
.mk { display: grid; width: 220px; grid-template-columns: 28px 57px 41px 44px 50px; }
.mk-first { grid-template-columns: 26px 74px 33px 38px 49px; }
.mk-last { width: 224px; grid-template-columns: 29px 50px 47px 45px 53px; }
.mk b { white-space: nowrap; }
.up { color: #e00000; }
.dn { color: #008000; }
.meters { display: flex; gap: 5px; }
.meter { width: 49px; }
.leds { display: grid; grid-template-columns: repeat(4, 1fr); height: 7px; }
.leds i { background: #e8e8e8; border: 1px solid #ccc; }
.leds .lr { background: #e00000; border-color: #e00000; }
.leds .lg { background: #008000; border-color: #008000; }
.dash { height: 5px; margin-top: 1px; background: repeating-linear-gradient(90deg, #e00000 0 5px, transparent 5px 7px); }
.host { margin-left: 7px; color: #202020; }

/* overlays */
.sub { position: absolute; font: bold 32px "Noto Sans CJK SC", sans-serif; line-height: 36px; white-space: nowrap; background: linear-gradient(#ffffff 25%, #35dcff 80%); -webkit-background-clip: text; background-clip: text; color: transparent; z-index: 3; }
.s1 { left: 809px; top: 1274px; }
.s2 { left: 953px; top: 1274px; }
.s3 { left: 1100px; top: 1274px; background-image: linear-gradient(#14a8ea, #0a70c8); }
.s4 { left: 1590px; top: 1331px; background-image: linear-gradient(#14a0e8, #0a68c0); }
.gauge { position: absolute; left: 2388px; top: 1249px; z-index: 3; }
.g-num { fill: #b8c0c8; font-size: 12px; font-family: "Liberation Sans", sans-serif; }
.g-unit { fill: #808890; font-size: 9px; font-family: "Liberation Sans", sans-serif; }
.g-pct { fill: #e8ecf0; font-size: 26px; font-family: "Liberation Sans", sans-serif; }
.g-sym { fill: #e8ecf0; font-size: 11px; font-family: "Liberation Sans", sans-serif; }
.ime { position: absolute; left: 2383px; bottom: 0; right: 0; height: 22px; display: flex; align-items: center; gap: 13px; z-index: 4; color: #1677d8; font-size: 15px; background: linear-gradient(90deg, transparent 30px, #fff 30px); padding-right: 6px; }
.ime b { font-weight: bold; margin-left: -7px; }
.ime-s { margin-top: -4px; flex: none; }
.ime-t { fill: #fff; font: italic bold 20px "Liberation Sans", sans-serif; text-anchor: middle; }
```

FILE: app.js
```js
(function () {
  var NS = [];
  function add(s) { NS.push(s); }
  function line(x1, y1, x2, y2, c) { add('<line x1="' + x1 + '" y1="' + y1 + '" x2="' + x2 + '" y2="' + y2 + '" class="' + c + '"/>'); }
  function text(x, y, t, c, anchor) { add('<text x="' + x + '" y="' + y + '" class="' + c + '"' + (anchor ? ' text-anchor="' + anchor + '"' : '') + '>' + t + '</text>'); }
  function rect(x, y, w, h, c) { add('<rect x="' + x + '" y="' + y + '" width="' + w + '" height="' + h + '" class="' + c + '"/>'); }
  function X(i) { return Math.round(219.5 + 12.967 * i); }

  /* candles, index -1 .. 138: type, wick top, body top, body bottom, wick bottom */
  var C = [
    ['R',755,758,760,763],['r',718,725,757,757],['r',683,702,733,739],['r',688,688,702,702],['r',632,632,689,689],['w',564,564,565,565],
    ['c',491,508,530,539],['c',556,565,603,603],['c',608,612,630,632],['c',624,628,641,642],['c',637,641,648,659],['r',643,645,652,655],
    ['r',591,606,648,657],['r',567,598,621,621],['c',600,607,615,627],['c',591,600,605,618],['c',617,618,632,634],['r',622,639,644,644],
    ['c',634,641,658,658],['r',650,655,658,660],['c',655,658,668,670],['c',662,662,676,678],['c',672,675,677,678],['r',668,670,676,677],
    ['c',672,673,674,675],['r',667,671,676,676],['r',633,637,668,669],['c',637,642,648,652],['c',655,656,657,658],['R',653,657,658,666],
    ['r',600,626,658,658],['r',610,623,638,642],['r',600,607,631,631],['c',586,609,623,624],['r',594,608,633,645],['c',586,608,611,613],
    ['r',579,587,613,628],['c',569,577,596,599],['r',521,521,606,606],['r',433,476,501,528],['r',400,432,476,497],['c',458,458,505,505],
    ['r',465,483,519,519],['c',450,480,500,515],['r',456,480,485,488],['r',450,465,483,483],['r',415,422,467,478],['r',386,418,429,464],
    ['r',308,308,404,414],['r',176,176,266,277],['c',177,177,242,246],['r',111,154,273,273],['c',105,142,169,206],['c',194,204,293,323],
    ['c',267,324,325,334],['c',305,324,440,440],['c',425,436,490,490],['c',457,473,491,498],['c',480,487,505,512],['r',497,497,527,545],
    ['r',447,473,520,530],['r',455,464,484,500],['r',434,458,466,475],['c',464,471,499,499],['r',446,448,487,487],['r',428,443,463,475],
    ['c',437,437,459,464],['r',357,357,446,448],['r',308,308,369,383],['r',289,290,293,295],['r',190,295,308,357],['r',160,160,305,305],
    ['c',117,160,322,322],['r',233,283,323,323],['r',169,201,264,273],['r',145,179,205,222],['c',153,167,203,224],['r',145,189,216,221],
    ['r',119,193,219,224],['r',155,186,189,209],['c',211,211,311,317],['r',253,274,287,324],['r',234,240,266,289],['r',216,224,266,271],
    ['c',109,109,194,203],['r',42,108,187,206],['c',117,140,162,226],['r',120,168,189,215],['r',96,143,204,204],['r',60,117,142,161],
    ['c',129,141,179,188],['c',165,189,230,235],['r',193,224,235,249],['c',195,215,224,234],['c',210,224,267,282],['c',252,286,289,298],
    ['r',255,276,294,308],['c',249,285,286,290],['c',275,304,311,311],['r',239,253,296,307],['c',237,246,286,288],['c',274,297,323,363],
    ['c',324,324,367,372],['c',358,363,381,391],['r',360,369,382,421],['r',349,349,370,375],['c',354,355,356,356],['c',363,363,393,394],
    ['c',357,378,393,398],['c',375,375,420,420],['c',414,433,453,457],['c',457,457,479,484],['c',480,483,519,522],['c',503,512,532,536],
    ['r',517,525,558,561],['r',493,520,524,548],['r',430,430,510,510],['r',405,416,431,442],['r',400,410,448,451],['c',365,380,396,399],
    ['r',344,362,411,411],['r',275,347,371,374],['r',329,355,360,366],['r',318,340,342,363],['c',334,343,380,391],['c',382,384,411,415],
    ['r',380,392,413,415],['r',348,364,396,400],['c',354,361,382,386],['c',365,368,382,390],['c',382,382,422,422],['r',409,414,429,440],
    ['c',414,419,424,437],['c',417,426,431,440],['c',426,436,448,455],['R',439,446,447,464],['c',436,449,468,473],['c',457,461,478,480],
    ['w',473,479,480,485],['r',443,450,484,484]
  ];

  var V = [1033,972,968,966,988,1031,-863,-866,-913,-951,-961,957,892,879,-935,-931,-951,963,-973,996,-991,-1001,-1008,996,-1004,1003,945,-976,989,996,934,975,962,-970,961,-959,945,-968,949,858,876,-927,954,-963,965,962,936,921,896,894,-866,868,-888,-892,-952,-901,-933,-934,-958,-983,929,929,943,-958,931,936,-952,866,861,888,867,845,-806,872,866,882,-904,902,897,936,-896,924,909,919,-884,827,-863,880,882,876,-919,-936,956,-972,-959,-973,970,-965,-980,952,-976,-964,-987,-992,962,971,970,-992,-990,-992,-981,-989,-985,-990,973,958,928,922,951,-947,952,914,960,959,-963,-978,988,968,-986,-1003,-991,998,-1009,-1009,-1005,1007,-999,-1009,1008,972];

  var M = [1031,1007,969,967,977,1009,950,865,893,930,957,959,925,885,907,933,942,957,968,985,993,997,1005,1003,1000,1003,975,961,987,994,963,954,968,967,967,962,953,957,960,903,867,902,940,960,964,963,950,923,907,893,878,868,878,892,922,927,917,933,947,971,957,930,937,951,945,935,944,900,863,875,877,853,827,838,870,877,895,903,898,916,916,910,915,913,900,855,846,872,881,880,900,932,950,964,966,966,971,967,973,967,964,969,977,991,977,966,970,983,991,991,986,986,987,989,980,957,937,926,940,949,951,934,937,959,961,973,983,978,977,995,997,994,1005,1009,1007,1006,1003,1005,1008,990];

  /* ---- main chart ---- */
  var p;
  for (p = 22; p >= 6; p--) {
    var y = 109 + (22 - p) * 39;
    if (p % 2 === 0) line(201, y + .5, 2055, y + .5, 'grid-dot');
    line(2055, y + .5, 2060, y + .5, 'line-red');
    if (p !== 8) text(2101, y + 4, p + '.00', 'ax', 'end');
  }
  line(2055.5, 22, 2055.5, 1041, 'line-red');
  line(201, 786.5, 2106, 786.5, 'line-red');
  line(201, 1041.5, 2106, 1041.5, 'line-red');
  add('<rect x="2056" y="637" width="50" height="15" fill="#000080"/>');
  text(2058, 649, '8.10', 'wh');

  line(282, 490, 1997, 490, 'yline');

  C.forEach(function (d, n) {
    var t = d[0], x = X(n - 1), lo = x - 4, tt = t === 'R' ? 'r' : t;
    if (d[1] < d[2]) line(x + .5, d[1], x + .5, d[2], 'wick-' + tt);
    if (d[4] > d[3]) line(x + .5, d[3], x + .5, d[4], 'wick-' + tt);
    if (t === 'r') rect(lo + .5, d[2] + .5, 8, d[3] - d[2], 'candle-r');
    else if (t === 'R') rect(lo, d[2], 9, Math.max(2, d[3] - d[2]), 'candle-R');
    else if (t === 'w') rect(lo, d[2], 9, Math.max(1, d[3] - d[2]), 'candle-w');
    else rect(lo, d[2], 9, Math.max(2, d[3] - d[2]), 'candle-c');
  });

  text(222, 766, '5.34', 'ann');
  add('<path d="M207 760h14M211 757l-4 3 4 3" fill="none" stroke="#d0d0d0"/>');
  text(1322, 53, '23.72', 'ann');
  add('<path d="M1308 43l13 5M1308 43v4" fill="none" stroke="#b0b0b0"/>');
  text(204, 36, '翰宇药业(日线,前复权)', 'ttl');
  add('<circle cx="335" cy="31" r="5" fill="#777"/><path d="M332.500 30l2.500 2.500 2.500-2.500" fill="none" stroke="#222"/>');
  add('<path d="M2027 26l5 5-5 5-5-5z" fill="none" stroke="#555"/><rect x="2041.500" y="26.500" width="11" height="10" rx="2" fill="none" stroke="#777"/><rect x="2047" y="27" width="5" height="9" fill="#777"/>');

  /* volume pane */
  [848, 911, 973].forEach(function (y) { line(201, y + .5, 2055, y + .5, 'grid-dot'); });
  [[15000, 848], [12500, 879], [10000, 911], [7500, 942], [5000, 973]].forEach(function (a) {
    line(2055, a[1] + .5, 2060, a[1] + .5, 'line-red');
    text(2101, a[1] + 4, a[0], 'ax', 'end');
  });
  V.forEach(function (v, n) {
    var x = X(n - 1), top = Math.abs(v);
    if (v < 0) rect(x - 4, top, 9, 1037 - top, 'candle-c');
    else rect(x - 3.5, top + .5, 8, 1036.5 - top, 'vol-r');
  });
  add('<polyline class="maline" points="' + M.map(function (m, n) { return X(n - 1) + ',' + m; }).join(' ') + '"/>');
  add('<circle cx="209" cy="795" r="5" fill="#777"/><path d="M206.500 794l2.500 2.500 2.500-2.500" fill="none" stroke="#222"/>');
  text(219, 800, 'VOL-TDX(2,2)', 'wh');
  text(299, 800, 'VOL: 510376', 'wh');
  text(383, 800, 'VOLUME: 510376', 'yl');
  text(487, 800, 'MA2: 368590', 'yl');
  text(561, 800, 'MA2: 368590', 'mg');
  add('<rect x="901" y="773" width="12" height="12" fill="#0a7a0a"/><rect x="1133" y="773" width="12" height="12" fill="#0a7a0a"/><rect x="1690" y="773" width="13" height="12" fill="#0a3a6a"/><rect x="1703" y="773" width="13" height="12" fill="#701010"/>');
  text(901, 783, '减', 'mark'); text(1133, 783, '跌', 'mark'); text(1691, 783, '财', 'mark'); text(1704, 783, '涨', 'mark');

  /* date axis */
  [['2021年', 206], ['12', 427], ['1', 727], ['2', 974], ['3', 1181], ['4', 1480], ['5', 1726], ['6', 1973]].forEach(function (a) { text(a[1], 1054, a[0], 'dt'); });
  add('<rect x="2048" y="1042" width="7" height="14" fill="#000080"/>');
  add('<rect x="2056.500" y="1027.500" width="32" height="12" fill="none" stroke="#a80000"/>');
  text(2058, 1037, 'X100', 'ax');
  text(2069, 1054, '日线', 'ttl');

  /* annotation arrows */
  function arrow(tx, ty, px, py, head, cls) {
    var dx = px - tx, dy = py - ty, L = Math.sqrt(dx * dx + dy * dy), ux = dx / L, uy = dy / L, nx = -uy, ny = ux;
    var bx = px - ux * head, by = py - uy * head, w1 = head * .15, w2 = head * .38;
    var pts = [[tx, ty], [bx + nx * w1, by + ny * w1], [bx + nx * w2, by + ny * w2], [px, py], [bx - nx * w2, by - ny * w2], [bx - nx * w1, by - ny * w1]];
    add('<polygon class="arrow' + (cls || '') + '" points="' + pts.map(function (q) { return q[0].toFixed(1) + ',' + q[1].toFixed(1); }).join(' ') + '"/>');
  }
  arrow(219, 757, 233, 688, 18);
  arrow(360.5, 662, 371, 563, 20);
  arrow(543.5, 633, 552.5, 660, 11, ' cy');
  arrow(596, 662, 608, 619, 18);
  arrow(709.5, 525, 727, 384, 22);
  arrow(987.5, 520, 995, 443, 18);
  arrow(1074.5, 445, 1089, 267, 20);
  arrow(1559, 415, 1565, 324, 20);
  arrow(2018, 480, 2026, 418, 17);

  [[195, 636, 245, 1063], [329, 512, 388, 1057], [568, 576, 623, 1054], [689, 356, 739, 1057], [959, 368, 1010, 1057], [1040, 244, 1104, 1057], [1531, 311, 1585, 1053], [1984, 382, 2046, 1062]].forEach(function (b) {
    rect(b[0] + 3.5, b[1] + 3.5, b[2] - b[0] - 7, b[3] - b[1] - 7, 'box');
  });
  rect(520.5, 592.5, 44, 460, 'box cy');

  document.getElementById('chart').innerHTML = NS.join('');

  /* ---- intraday ---- */
  NS = [];
  function ZX(v) { return (2090 + v / 3).toFixed(1); }
  function ZY(v) { return (400 + v / 3).toFixed(1); }
  text(2108, 415, '翰宇药业', 'ttl');
  add('<rect x="2107.500" y="421.500" width="182" height="905" fill="none" stroke="#a80000"/>');
  var labs = ['13.48', '13.35', '13.22', '13.09', '12.95', '12.82', '12.69', '12.56', '12.43', '12.30', '12.17', '12.03', '11.90', '11.77'];
  labs.forEach(function (t, k) {
    var y = 421 + k * 43;
    if (k > 0 && k !== 7) line(2107, y + .5, 2289, y + .5, 'grid-dot');
    if (k === 7) line(2107, y + .5, 2289, y + .5, 'line-red');
    text(2293, y + 5, t, k < 7 ? 'lab-r' : k === 7 ? 'lab-w' : 'lab-g');
  });
  line(2107, 1025.5, 2289, 1025.5, 'line-red');
  [['13572', 1025], ['11633', 1068], ['9694', 1111], ['7755', 1154], ['5816', 1198], ['3878', 1241], ['1939', 1284]].forEach(function (a, k) {
    if (k > 0) line(2107, a[1] + .5, 2289, a[1] + .5, 'grid-dot');
    text(2292, a[1] + 5, a[0], 'lab-y');
  });
  [2152, 2244].forEach(function (x) { line(x + .5, 421, x + .5, 1327, 'grid-dot'); });
  line(2198.5, 421, 2198.5, 1327, 'line-red');

  var B = [[52,1045],[58,1220],[64,1040],[70,1120],[73,920],[78,1190],[85,1040],[90,1150],[98,1240],[105,1210],[112,1095],[118,1170],[125,1240],[132,1280],[140,1260],[148,1240],[155,1170],[160,1065],[166,618],[168,1022],[172,1200],[178,1215],[188,1225],[195,1295],[205,1290],[215,1280],[220,1220],[228,960],[232,1100],[238,1200],[245,1240],[255,1270],[262,1265],[270,1280],[280,1235],[288,1310],[295,1280],[305,1310],[315,1305],[322,1250],[330,1280],[340,1250],[350,1240],[355,1110],[358,516],[362,1090],[368,1080],[372,1045],[376,740],[380,840],[385,513],[390,940],[395,865],[400,810],[405,985],[410,1065],[415,1120],[421,970],[428,1060],[434,1050],[440,1210],[448,1175],[455,1240],[465,1215],[472,1250],[480,1270],[490,1310],[500,1290],[507,1320],[514,1150],[520,1240],[528,1260],[540,1305],[548,1270],[556,1170],[565,1270],[574,1200],[580,1125],[586,1150],[590,1160],[593,1080],[597,795]];
  B.forEach(function (b, n) {
    var next = n < B.length - 1 ? B[n + 1][0] : b[0] + 3;
    var x = 2090 + b[0] / 3, top = 880 + b[1] / 3;
    rect(x.toFixed(1), top.toFixed(1), Math.max(1, (next - b[0]) / 3).toFixed(1), (1327 - top).toFixed(1), 'ibar');
  });

  var PL = [[52,1065],[55,1130],[60,1020],[65,905],[68,950],[75,850],[82,790],[86,840],[92,820],[100,815],[106,770],[112,830],[120,860],[124,915],[128,850],[135,920],[142,925],[150,900],[158,820],[165,720],[172,740],[180,810],[186,835],[190,870],[198,885],[205,860],[215,860],[220,740],[225,730],[229,610],[234,680],[242,610],[246,660],[254,655],[260,710],[268,745],[275,665],[285,700],[294,680],[304,708],[314,695],[325,665],[335,695],[343,718],[350,650],[355,540],[362,470],[372,515],[375,430],[382,320],[390,260],[400,130],[405,195],[412,125],[421,60],[425,95],[430,90],[434,180],[442,240],[448,210],[458,260],[460,320],[468,325],[478,270],[484,260],[490,295],[505,290],[517,228],[525,245],[533,240],[540,285],[552,265],[560,245],[570,255],[575,228],[582,275],[590,255],[598,262]];
  var AL = [[52,1100],[58,1090],[65,1010],[75,970],[85,925],[95,910],[110,895],[118,888],[155,888],[165,865],[178,853],[220,853],[235,828],[250,817],[290,810],[320,806],[352,800],[368,770],[382,730],[395,670],[410,630],[430,590],[450,573],[480,566],[510,560],[540,549],[570,540],[597,527]];
  function pts(a) { return a.map(function (q) { return ZX(q[0]) + ',' + ZY(q[1]); }).join(' '); }
  function jagged(a) {
    var out = [];
    a.forEach(function (q, n) {
      out.push(q);
      if (n < a.length - 1) {
        var r = a[n + 1];
        if (r[0] - q[0] >= 6) out.push([(q[0] + r[0]) / 2, (q[1] + r[1]) / 2 + (n % 2 ? 7 : -7)]);
      }
    });
    return out;
  }
  add('<polyline class="pline" points="' + pts(jagged(PL)) + '"/>');
  add('<polyline class="aline" points="' + pts(AL) + '"/>');
  document.getElementById('intraday').innerHTML = NS.join('');

  /* ---- mini bar chart ---- */
  NS = [];
  function MX(v) { return (2090 + v / 3).toFixed(1); }
  [['7.60', 93], ['5.70', 112], ['3.80', 131], ['1.90', 150], ['0.00', 168]].forEach(function (a) { text(2381, a[1], a[0], 'mini-l', 'end'); });
  add('<path d="M2383.500 90V164.500H2544" fill="none" stroke="#3c3c3c"/>');
  [[912,480,'#ff4500'],[937,480,'#ff4500'],[961,480,'#ff4500'],[985,292,'#00dc00'],[1074,480,'#ff4500'],[1098,474,'#00dc00'],[1122,462,'#00dc00'],[1146,445,'#ff4500'],[1233,472,'#00dc00']].forEach(function (b) {
    add('<rect x="' + MX(b[0]) + '" y="' + (b[1] / 3).toFixed(1) + '" width="6.500" height="' + ((489 - b[1]) / 3).toFixed(1) + '" fill="' + b[2] + '"/>');
  });
  [['2020', 2410], ['2021', 2462], ['2022', 2516]].forEach(function (a) { text(a[1], 178, a[0], 'mini-l', 'middle'); });
  text(2543, 94, '净利润(亿)', 'mini-t', 'end');
  document.getElementById('mini').innerHTML = NS.join('');
})();
```
